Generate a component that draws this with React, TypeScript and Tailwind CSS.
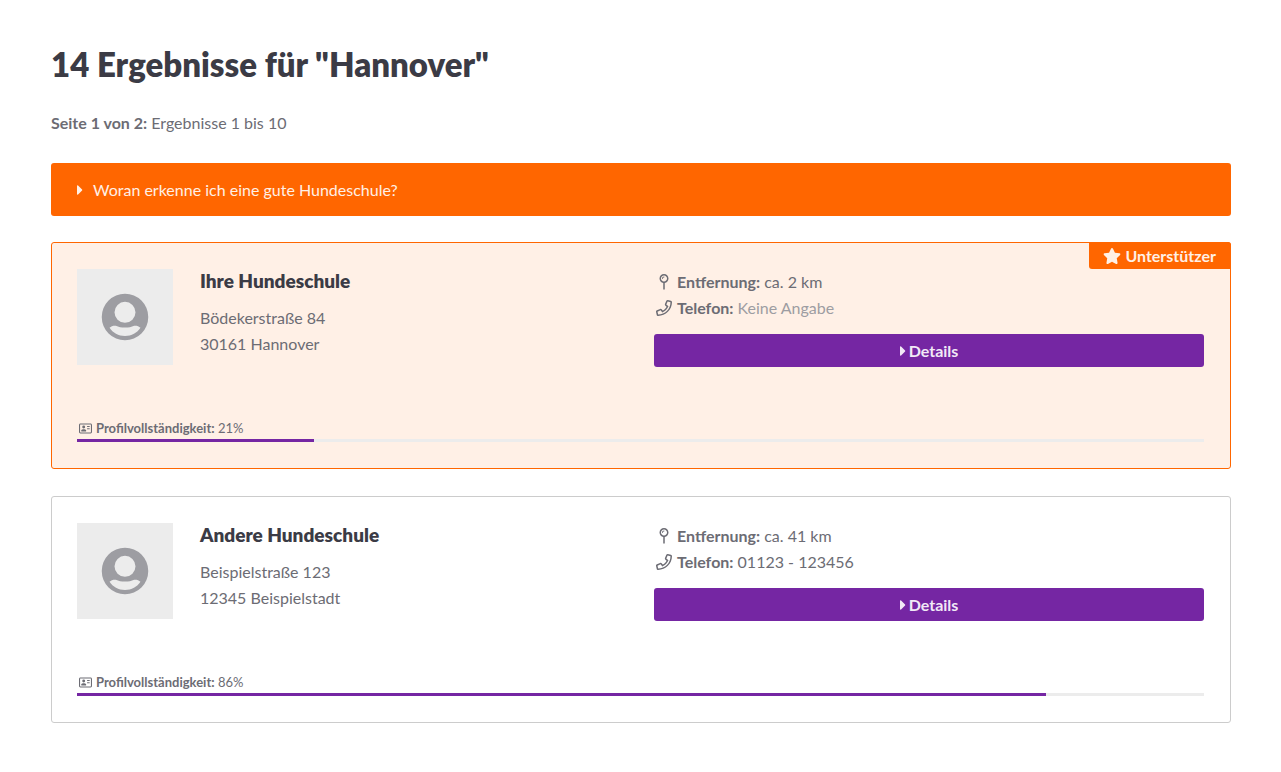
import { FaCaretRight, FaStar } from 'react-icons/fa';
import { FaRegAddressCard } from 'react-icons/fa6';

interface School {
    id: number;
    name: string;
    street: string;
    city: string;
    distance: string;
    phone?: string;
    completeness: number;
    supporter?: boolean;
}

const schools: School[] = [
    {
        id: 1,
        name: 'Ihre Hundeschule',
        street: 'Bödekerstraße 84',
        city: '30161 Hannover',
        distance: 'ca. 2 km',
        completeness: 21,
        supporter: true
    },
    {
        id: 2,
        name: 'Andere Hundeschule',
        street: 'Beispielstraße 123',
        city: '12345 Beispielstadt',
        distance: 'ca. 41 km',
        phone: '01123 - 123456',
        completeness: 86
    }
];

function PinIcon() {
    return (
        <svg viewBox="0 0 288 512" className="h-4 w-5 shrink-0" fill="currentColor" aria-hidden="true">
            <path d="M144 0C64.47 0 0 64.47 0 144c0 71.31 51.96 130.1 120 141.58v197.64l16.51 24.77c3.56 5.34 11.41 5.34 14.98 0L168 483.22V285.58C236.04 274.1 288 215.31 288 144 288 64.47 223.53 0 144 0zm0 240c-52.94 0-96-43.07-96-96 0-52.94 43.06-96 96-96s96 43.06 96 96c0 52.93-43.06 96-96 96zm0-160c-35.3 0-64 28.7-64 64 0 8.84 7.16 16 16 16s16-7.16 16-16c0-17.64 14.36-32 32-32 8.84 0 16-7.16 16-16s-7.16-16-16-16z" />
        </svg>
    );
}

function PhoneIcon() {
    return (
        <svg viewBox="0 0 512 512" className="h-4 w-5 shrink-0" fill="currentColor" aria-hidden="true">
            <path d="M476.5 22.9L382.3 1.2c-21.6-5-43.6 6.2-52.3 26.6l-43.5 101.5c-8 18.6-2.6 40.6 13.1 53.4l40 32.7C311 267.8 267.8 311 215.4 339.5l-32.7-40c-12.8-15.7-34.8-21.1-53.4-13.1L27.7 329.9c-20.4 8.7-31.5 30.7-26.6 52.3l21.7 94.2c4.8 20.9 23.2 35.5 44.6 35.5C312.3 512 512 313.7 512 67.5c0-21.4-14.6-39.8-35.5-44.6zM69.3 464l-20.9-90.7 98.2-42.1 55.7 68.1c98.8-46.4 150.6-98 197-197l-68.1-55.7 42.1-98.2L464 69.3C463 286.9 286.9 463 69.3 464z" />
        </svg>
    );
}

function UserIcon() {
    return (
        <svg viewBox="0 0 496 512" className="size-12" fill="currentColor" fillRule="evenodd" aria-hidden="true">
            <path d="M248 8a248 248 0 1 0 0 496a248 248 0 1 0 0-496zM248 94a112 112 0 1 1 0 224a112 112 0 1 1 0-224zM83 371c15-17 35-23 57-23h10c30 14 60 20 98 20s68-6 98-20h10c22 0 42 6 57 23c-35 53-95 88-165 88S118 424 83 371z" />
        </svg>
    );
}

function SchoolCard({ school }: { school: School }) {
    return (
        <article
            className={`relative rounded-[3px] border pt-[26px] pr-[26px] pb-[26px] pl-[25px] ${school.supporter ? 'border-[#ff6600] bg-[#fff0e6]' : 'border-[#cccccc] bg-white'}`}
        >
            {/* Supporter badge */}
            {school.supporter && (
                <div className="absolute -top-px -right-px flex h-[27px] items-center gap-[3px] rounded-tr-[3px] rounded-bl-[3px] bg-[#ff6600] pr-[15px] pl-[13px] font-bold text-[#fff0e6]">
                    <FaStar className="h-4 w-5" />
                    Unterstützer
                </div>
            )}

            <div className="grid grid-cols-2 gap-[27px]">
                <div className="flex gap-[27px]">
                    <div className="flex size-24 shrink-0 items-center justify-center bg-[#ececec] text-[#9d9da2]">
                        <UserIcon />
                    </div>
                    <div>
                        <h2 className="mb-3 text-[19px] leading-6 font-extrabold text-[#3b3b45]">{school.name}</h2>
                        <address className="not-italic">
                            {school.street}
                            <br />
                            {school.city}
                        </address>
                    </div>
                </div>

                <div>
                    <div className="flex items-center gap-[3px]">
                        <PinIcon />
                        <p>
                            <strong>Entfernung:</strong> {school.distance}
                        </p>
                    </div>
                    <div className="flex items-center gap-[3px]">
                        <PhoneIcon />
                        <p>
                            <strong>Telefon:</strong>{' '}
                            {school.phone ?? <span className="text-[#9d9da2]">Keine Angabe</span>}
                        </p>
                    </div>
                    <a
                        href={`#hundeschule-${school.id}`}
                        className="mt-[13px] flex h-[33px] items-center justify-center gap-[3px] rounded-[3px] bg-[#7526a3] font-bold text-[#f1e9f6]"
                    >
                        <FaCaretRight className="h-4 w-[6px]" />
                        Details
                    </a>
                </div>
            </div>

            {/* Profile completeness */}
            <div className="mt-[51px] flex items-center gap-1 pl-[2px] text-[13px] leading-[21px]">
                <FaRegAddressCard className="size-[13px]" />
                <p>
                    <strong>Profilvollständigkeit:</strong> {school.completeness}%
                </p>
            </div>
            <div className="h-[3px] bg-[#ececec]">
                <div className="h-full bg-[#7526a3]" style={{ width: `${school.completeness}%` }} />
            </div>
        </article>
    );
}

export default function App() {
    return (
        <main className="bg-white pt-[38px] pr-[50px] pb-[50px] pl-[51px] font-['Lato',sans-serif] text-base leading-[26px] text-[#6c6c74]">
            <h1 className="text-[33px] leading-[52px] font-extrabold text-[#3b3b45]">14 Ergebnisse für "Hannover"</h1>
            <p className="mt-5">
                <strong>Seite 1 von 2:</strong> Ergebnisse 1 bis 10
            </p>

            <details className="mt-[27px] rounded-[3px] bg-[#ff6600] text-[#fff0e6]">
                <summary className="flex h-[53px] cursor-pointer list-none items-center gap-[10px] px-[26px]">
                    <FaCaretRight className="h-4 w-[6px]" />
                    Woran erkenne ich eine gute Hundeschule?
                </summary>
            </details>

            <div className="mt-[26px] flex flex-col gap-[27px]">
                {schools.map((school) => (
                    <SchoolCard key={school.id} school={school} />
                ))}
            </div>
        </main>
    );
}
